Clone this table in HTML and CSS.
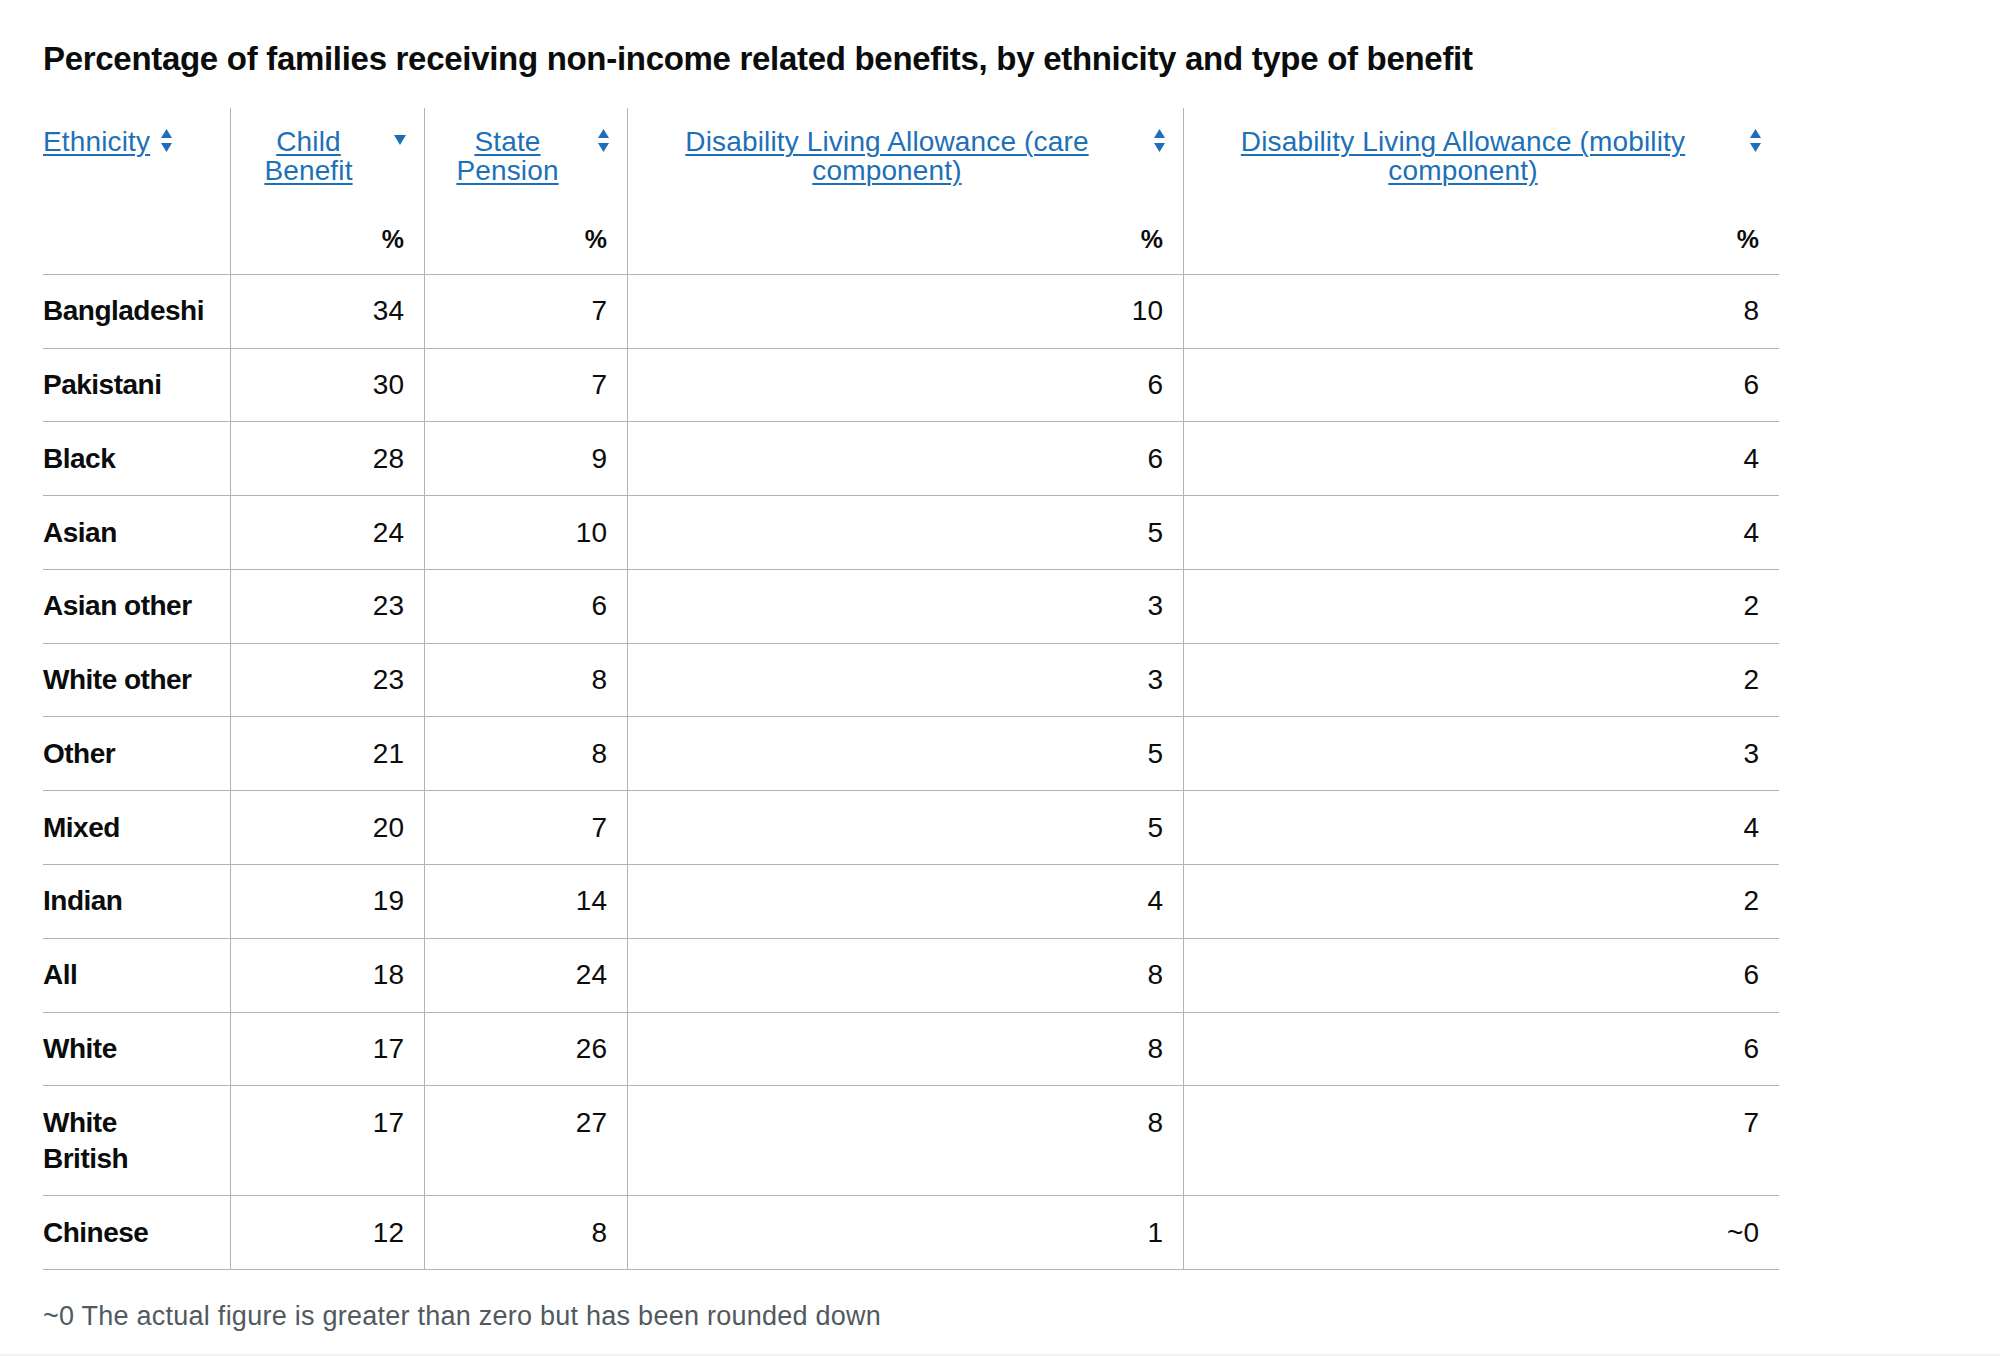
FILE: index.html
```html
<!DOCTYPE html>
<html lang="en">
<head>
<meta charset="utf-8">
<title>Percentage of families receiving non-income related benefits</title>
<link rel="stylesheet" href="styles.css">
</head>
<body>
<div class="page">
  <h2 class="title">Percentage of families receiving non-income related benefits, by ethnicity and type of benefit</h2>
  <table class="data">
    <colgroup>
      <col class="c1"><col class="c2"><col class="c3"><col class="c4"><col class="c5">
    </colgroup>
    <thead>
      <tr class="head-main">
        <th class="th-eth"><a href="#">Ethnicity</a><span class="sort both inline"><svg width="11" height="23" viewBox="0 0 11 23"><polygon points="5.5,0 11,9 0,9"/><polygon points="0,14 11,14 5.5,23"/></svg></span></th>
        <th><div class="th-inner"><a href="#">Child Benefit</a><span class="sort desc"><svg width="12" height="10" viewBox="0 0 12 10"><polygon points="0,0 12,0 6,10"/></svg></span></div></th>
        <th><div class="th-inner"><a href="#">State Pension</a><span class="sort both"><svg width="11" height="23" viewBox="0 0 11 23"><polygon points="5.5,0 11,9 0,9"/><polygon points="0,14 11,14 5.5,23"/></svg></span></div></th>
        <th><div class="th-inner"><a href="#">Disability Living Allowance (care component)</a><span class="sort both"><svg width="11" height="23" viewBox="0 0 11 23"><polygon points="5.5,0 11,9 0,9"/><polygon points="0,14 11,14 5.5,23"/></svg></span></div></th>
        <th class="last"><div class="th-inner"><a href="#">Disability Living Allowance (mobility component)</a><span class="sort both"><svg width="11" height="23" viewBox="0 0 11 23"><polygon points="5.5,0 11,9 0,9"/><polygon points="0,14 11,14 5.5,23"/></svg></span></div></th>
      </tr>
      <tr class="head-unit">
        <th class="first"></th><th>%</th><th>%</th><th>%</th><th class="last">%</th>
      </tr>
    </thead>
    <tbody>
      <tr><th>Bangladeshi</th><td>34</td><td>7</td><td>10</td><td class="last">8</td></tr>
      <tr><th>Pakistani</th><td>30</td><td>7</td><td>6</td><td class="last">6</td></tr>
      <tr><th>Black</th><td>28</td><td>9</td><td>6</td><td class="last">4</td></tr>
      <tr><th>Asian</th><td>24</td><td>10</td><td>5</td><td class="last">4</td></tr>
      <tr><th>Asian other</th><td>23</td><td>6</td><td>3</td><td class="last">2</td></tr>
      <tr><th>White other</th><td>23</td><td>8</td><td>3</td><td class="last">2</td></tr>
      <tr><th>Other</th><td>21</td><td>8</td><td>5</td><td class="last">3</td></tr>
      <tr><th>Mixed</th><td>20</td><td>7</td><td>5</td><td class="last">4</td></tr>
      <tr><th>Indian</th><td>19</td><td>14</td><td>4</td><td class="last">2</td></tr>
      <tr><th>All</th><td>18</td><td>24</td><td>8</td><td class="last">6</td></tr>
      <tr><th>White</th><td>17</td><td>26</td><td>8</td><td class="last">6</td></tr>
      <tr><th>White British</th><td>17</td><td>27</td><td>8</td><td class="last">7</td></tr>
      <tr><th>Chinese</th><td>12</td><td>8</td><td>1</td><td class="last">~0</td></tr>
    </tbody>
  </table>
  <p class="note">~0 The actual figure is greater than zero but has been rounded down</p>
</div>
</body>
</html>
```
FILE: styles.css
```css
* {
  box-sizing: border-box;
}

html,
body {
  margin: 0;
  padding: 0;
  background: #ffffff;
}

body {
  font-family: "Liberation Sans", Arial, sans-serif;
  color: #0b0c0c;
}

.page {
  min-height: 1356px;
  padding: 39px 0 0 43px;
  border-bottom: 2px solid #f3f2f1;
}

.title {
  margin: 0;
  font-size: 33px;
  line-height: 40px;
  font-weight: 700;
  letter-spacing: -0.3px;
}

.data {
  margin-top: 29px;
  width: 1736px;
  table-layout: fixed;
  border-collapse: separate;
  border-spacing: 0;
  font-size: 28px;
}

.c1 { width: 188px; }
.c2 { width: 194px; }
.c3 { width: 203px; }
.c4 { width: 556px; }
.c5 { width: 595px; }

.data th,
.data td {
  border-right: 1px solid #b1b4b6;
  border-bottom: 1px solid #b1b4b6;
}

.data .last {
  border-right: none;
}

.data a {
  color: #1d70b8;
  text-decoration: underline;
  text-decoration-thickness: 2px;
  text-underline-offset: 3px;
}

/* header row with sortable links */
.head-main th {
  padding: 19px 18px 16px 0;
  vertical-align: top;
  font-weight: 400;
  line-height: 29px;
  text-align: left;
  letter-spacing: 0.15px;
  border-bottom: none;
}

.th-inner {
  display: flex;
  align-items: flex-start;
  gap: 8px;
}

.th-inner a {
  flex: 1;
  text-align: center;
}

.sort svg {
  display: block;
  fill: #1d70b8;
}

.sort.both {
  margin-top: 2px;
}

.sort.desc {
  margin-top: 8px;
}

.sort.inline {
  display: inline-block;
  vertical-align: top;
  margin-left: 11px;
  margin-top: 2px;
}

/* unit row */
.head-unit th {
  padding: 20px 20px 16.8px 0;
  line-height: 36px;
  font-size: 25px;
  font-weight: 700;
  text-align: right;
}

/* body */
.data tbody th,
.data tbody td {
  padding: 18.4px 20px 18.4px 0;
  line-height: 36px;
  vertical-align: top;
}

.data tbody th {
  text-align: left;
  font-weight: 700;
  letter-spacing: -0.5px;
  padding-right: 24px;
}

.data tbody td {
  text-align: right;
  font-weight: 400;
}

.note {
  margin: 28px 0 0;
  font-size: 27px;
  line-height: 36px;
  letter-spacing: 0.25px;
  color: #505a5f;
}
```
